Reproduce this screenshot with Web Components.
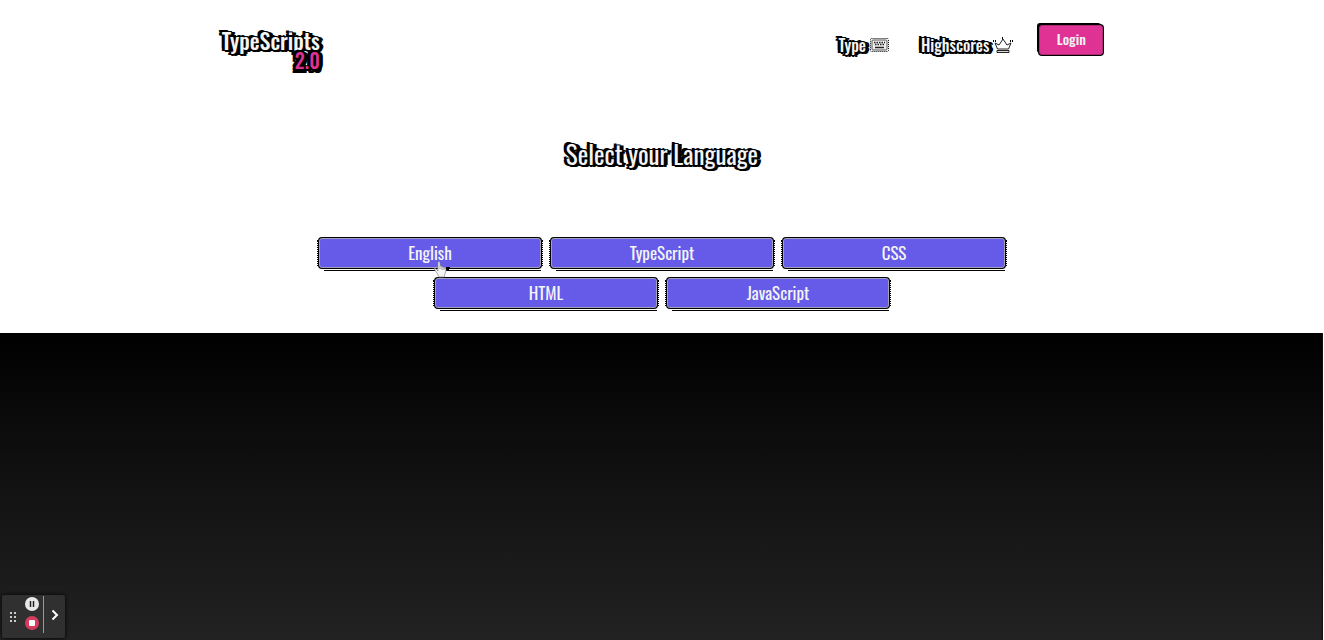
<!DOCTYPE html>
<html lang="en">
<head>
<meta charset="utf-8">
<title>TypeScripts 2.0</title>
<style>
  html, body { margin: 0; min-height: 100%; }
  body {
    min-height: 100vh; display: flex;
    font-family: Oswald, "Liberation Sans Narrow", "Open Sans Condensed", "Roboto Condensed", Roboto, sans-serif;
    --ink: #f4f4f4; --pink: #df3294; --violet: #655be8;
    --halo: -1px -1px 0 #000, 1px -1px 0 #000, -1px 1px 0 #000, 1px 1px 0 #000,
            -2px 0 0 #000, 2px 0 0 #000, 0 2px 0 #000, -3px 1px 0 #000, 3px 2px 0 #000, 4px 0 0 #000, -3px -2px 0 #000;
  }
</style>
</head>
<body>
<typing-app></typing-app>
<script>
const define = (name, html) => customElements.define(name, class extends HTMLElement {
  constructor() {
    super();
    const t = document.createElement('template');
    t.innerHTML = html;
    this.attachShadow({ mode: 'open' }).append(t.content.cloneNode(true));
  }
});

define('site-logo', `
<style>
  :host { display: block; }
  a { display: grid; justify-items: end; color: var(--ink); text-decoration: none; font-size: 22px; line-height: 20px; font-weight: 500; text-shadow: var(--halo); }
  span { color: var(--pink); font-size: 20px; text-shadow: var(--halo), -3px 4px 0 #000, 3px 4px 0 #000; }
</style>
<a href="#home">TypeScripts<span>2.0</span></a>`);

define('nav-link', `
<style>
  :host { display: block; }
  a { display: flex; align-items: center; gap: 4px; color: var(--ink); text-decoration: none; font-size: 16px; line-height: 24px; font-weight: 500; text-shadow: var(--halo); }
  ::slotted(svg) { display: block; }
</style>
<a href="#"><slot></slot><slot name="icon"></slot></a>`);

define('login-button', `
<style>
  :host { display: block; }
  button { display: block; width: 64px; height: 30px; padding: 0 0 4px; border: 1px solid #ad2b77; border-radius: 3px; background: var(--pink); color: var(--ink); font: inherit; font-size: 14px; font-weight: 500;
    box-shadow: 0 0 0 1px #000, -2px -2px 0 #000; }
</style>
<button type="button"><slot></slot></button>`);

define('site-header', `
<style>
  :host { display: block; padding: 25px 16.6667% 0; }
  header, nav { display: flex; align-items: flex-start; }
  header { justify-content: space-between; padding-bottom: 66px; }
  site-logo { padding: 5px 0 0 1px; }
  nav-link { padding-top: 8px; }
  nav { gap: 26px; }
  nav-link + nav-link { padding-left: 6px; }
</style>
<header>
  <site-logo></site-logo>
  <nav>
    <nav-link>Type
      <svg slot="icon" width="19" height="14" viewBox="0 0 19 14" aria-hidden="true">
        <rect x=".5" y=".5" width="18" height="13" rx="1" fill="#fff" stroke="#000" stroke-dasharray="1 1"/>
        <rect x="2" y="2" width="15" height="10" rx="1" fill="#eee" stroke="#555"/>
        <path d="M4 4.500h11M5 6.500h10" stroke="#222" stroke-width="1.500" stroke-dasharray="1.500 1"/><path d="M5 9.500h9" stroke="#222" stroke-width="1.500"/>
      </svg>
    </nav-link>
    <nav-link>Highscores
      <svg slot="icon" width="20" height="17" viewBox="0 0 20 17" aria-hidden="true">
        <path d="M4.500 12 2 6l4 2 4-6 4 6 4-2-2.500 6z" fill="#fff" stroke="#222"/>
        <path d="M4 13.500h12v2H4z" fill="#ddd" stroke="#222"/>
        <path d="M0 4h3M9 1h2M17 4h3" stroke="#000" stroke-width="2" stroke-dasharray="1 1"/>
      </svg>
    </nav-link>
    <login-button>Login</login-button>
  </nav>
</header>`);

define('language-button', `
<style>
  :host { display: block; flex: 0 0 222px; }
  button { display: block; width: 100%; height: 30px; padding: 0; border: 1px solid #a3a2bd; border-radius: 3px; background: var(--violet); color: var(--ink); font: inherit; font-size: 17px; line-height: 28px; cursor: pointer;
    box-shadow: 0 0 0 1px #000; position: relative; }
  button::after { content: ""; position: absolute; left: 4px; right: -1px; top: 31px; height: 1px; background: #000; }
  button::before { content: ""; position: absolute; inset: 1px -3px; border: dotted #000; border-width: 0 1px; }
</style>
<button type="button"><slot></slot></button>`);

define('language-picker', `
<style>
  :host { display: block; padding-bottom: 25px; }
  h1 { margin: 0 0 66px; text-align: center; color: var(--ink); font-size: 25px; line-height: 36px; font-weight: 400; text-shadow: var(--halo); }
  div { display: flex; flex-wrap: wrap; justify-content: center; gap: 10px; max-width: 686px; margin: 0 auto; }
</style>
<h1>Select your Language</h1>
<div>
  <language-button>English</language-button>
  <language-button>TypeScript</language-button>
  <language-button>CSS</language-button>
  <language-button>HTML</language-button>
  <language-button>JavaScript</language-button>
</div>`);

define('hand-pointer', `
<style>:host { position: absolute; left: calc(50% - 229px); top: 261px; z-index: 2; pointer-events: none; } svg { display: block; }</style>
<svg width="17" height="17" viewBox="0 0 17 17" aria-hidden="true">
  <path d="M13 6h4v2h-1v2h-3z" fill="#000"/>
  <path d="M5 1q2-1 2 1v3q1-1 2 1 1-1 2 1 2-1 2 2l-1 4-1 3H6l-2-4-3-4q1-1 2 0l2 2z" fill="#f5f5f5" stroke="#888" stroke-width=".7"/>
  <path d="M7 5v3M9 6v3M11 7v2" stroke="#999" fill="none"/>
</svg>`);

define('recorder-bar', `
<style>
  :host { position: fixed; left: 2px; bottom: 2px; display: flex; align-items: center; width: 63px; height: 43px; border-radius: 2px; background: #303030; box-shadow: 0 0 4px #000; }
  button { display: block; padding: 0; border: 0; background: none; }
  svg { display: block; }
  .grip { margin: 0 9px 0 8px; }
  .stack { display: grid; gap: 5px; padding-bottom: 6px; }
  .more { border-left: 1px solid #999; height: 37px; margin: 0 0 4px 4px; padding-left: 7px; }
</style>
<svg class="grip" width="6" height="12" viewBox="0 0 6 12" fill="#ccc" aria-hidden="true"><path d="M0 1h2v2H0zM4 1h2v2H4zM0 5h2v2H0zM4 5h2v2H4zM0 9h2v2H0zM4 9h2v2H4z"/></svg>
<div class="stack">
  <button type="button" aria-label="Pause"><svg width="14" height="14" viewBox="0 0 14 14"><circle cx="7" cy="7" r="7" fill="#e8e8e8"/><path d="M5.500 4v6M8.500 4v6" stroke="#222" stroke-width="1.500"/></svg></button>
  <button type="button" aria-label="Stop"><svg width="14" height="14" viewBox="0 0 14 14"><circle cx="7" cy="7" r="7" fill="#d33c5c"/><rect x="4" y="4" width="6" height="6" rx="1" fill="#fff"/></svg></button>
</div>
<button class="more" type="button" aria-label="Expand"><svg width="8" height="12" viewBox="0 0 8 12"><path d="m1.500 1.500 4.500 4.500-4.500 4.500" fill="none" stroke="#fff" stroke-width="2"/></svg></button>`);

define('typing-app', `
<style>
  :host { display: flex; flex-direction: column; flex: 1; min-height: 100vh; background: #fff; position: relative; }
  .floor { flex: 1; margin-right: 2px; background: linear-gradient(#000, #0c0c0c 32%, #222); box-shadow: 1px 0 0 #111; }
</style>
<site-header></site-header>
<main><language-picker></language-picker></main>
<div class="floor"></div>
<hand-pointer></hand-pointer>
<recorder-bar></recorder-bar>`);
</script>
</body>
</html>
